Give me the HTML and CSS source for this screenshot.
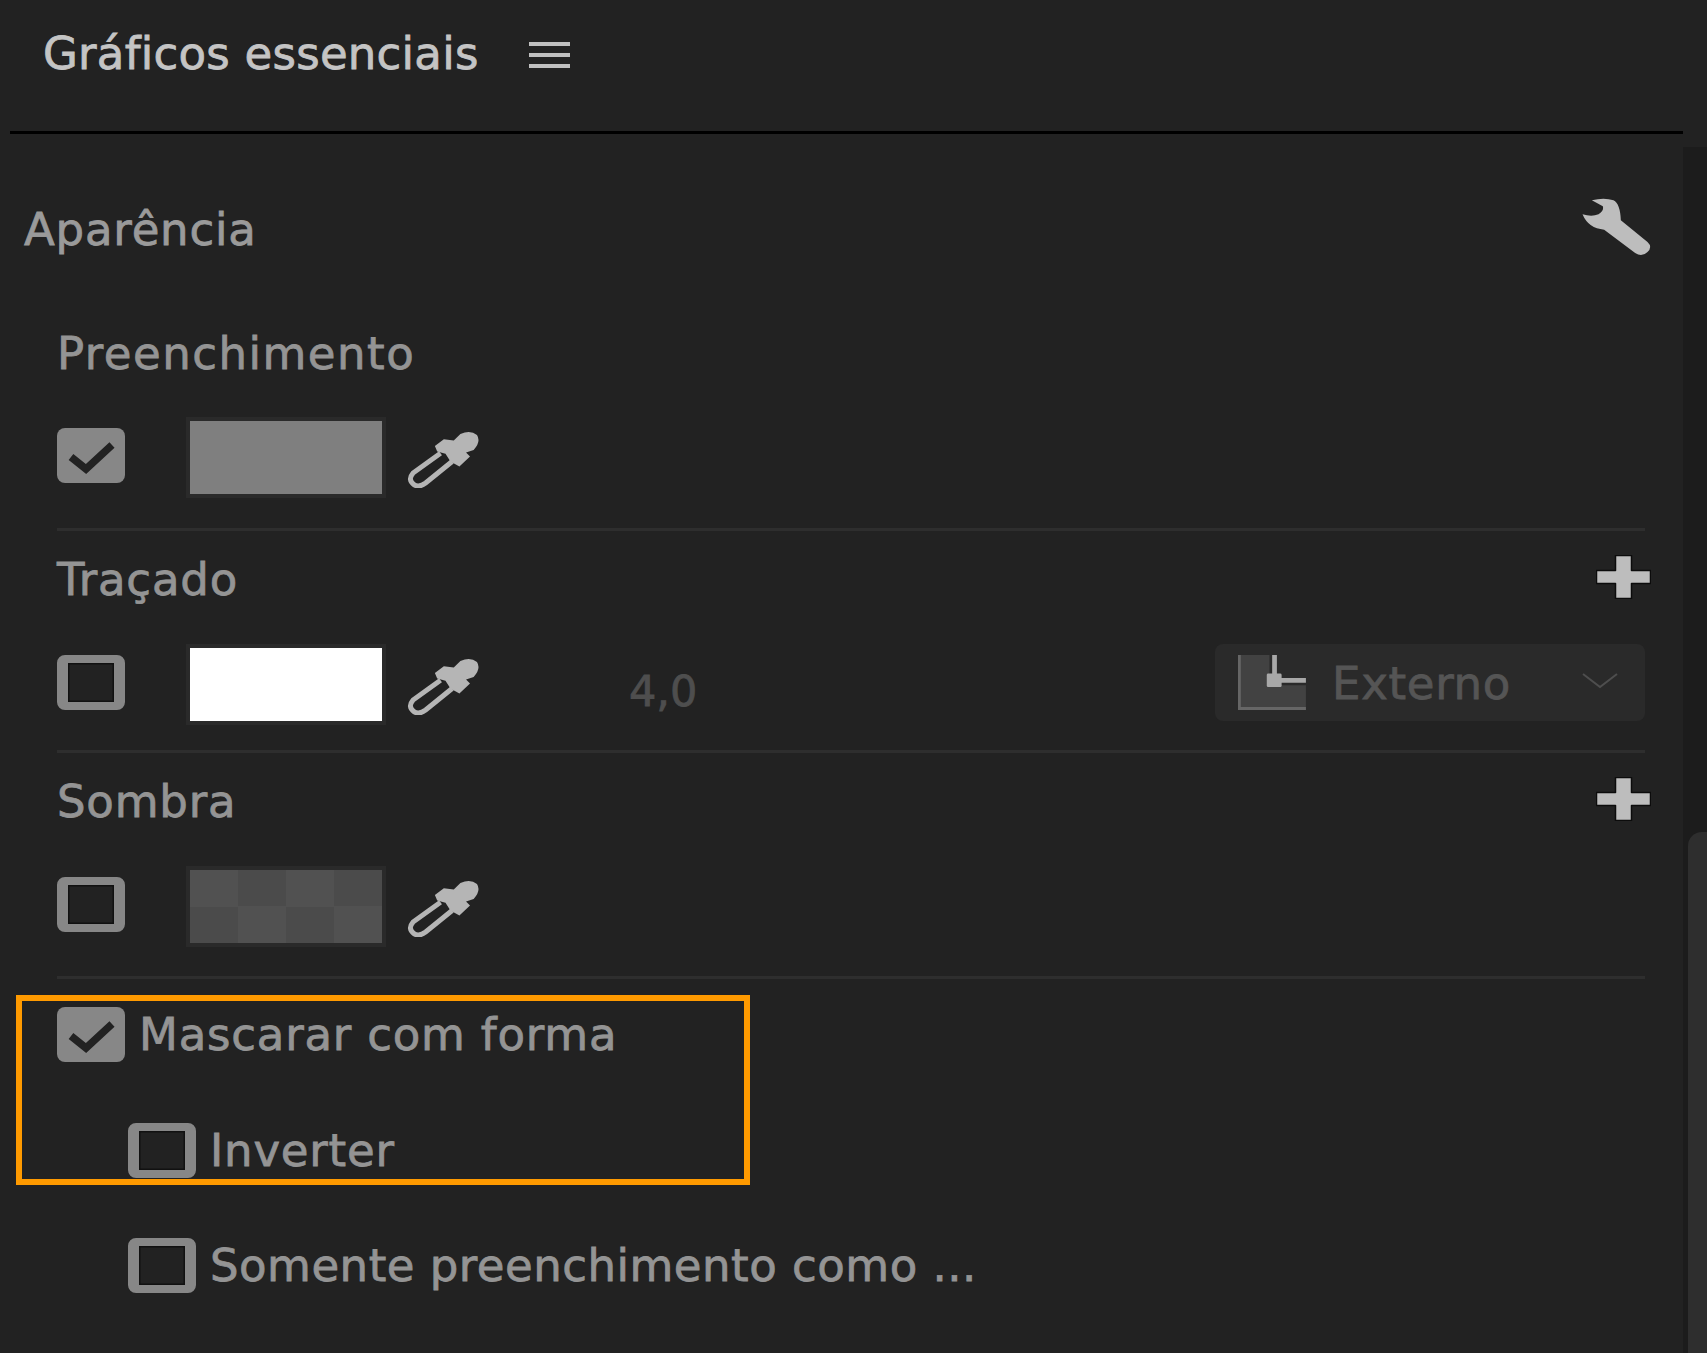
FILE: index.html
```html
<!DOCTYPE html>
<html lang="pt">
<head>
  <meta charset="UTF-8">
  <meta name="viewport" content="width=device-width, initial-scale=1.0">
  <title>Gráficos essenciais</title>
  <link rel="stylesheet" href="styles.css">
</head>
<body>
  <svg class="defs" width="0" height="0">
    <symbol id="eyedropper" viewBox="35 30 215 175">
      <path d="M118 78 L145 58 L175 62 L195 42 Q225 28 245 45 Q258 65 235 90 L212 98 L224 110 L192 140 L165 125 L150 102 L125 95 Z" fill="#b5b5b5"/>
      <path d="M135 100 L52 160 Q35 180 55 195 Q70 205 90 190 L170 125" fill="none" stroke="#b5b5b5" stroke-width="15"/>
    </symbol>
    <symbol id="plus" viewBox="0 0 55 44">
      <path d="M19.5 .5 H35.5 V15.5 H54.5 V28.5 H35.5 V43.5 H19.5 V28.5 H.5 V15.5 H19.5 Z" fill="#bdbdbd" stroke="#0c0c0c" stroke-width="1.5" stroke-linejoin="round"/>
    </symbol>
    <symbol id="check" viewBox="0 0 68 55">
      <path d="M14 29 L29 41 L55 17" fill="none" stroke="#222" stroke-width="7.5"/>
    </symbol>
  </svg>

  <header class="panel-head">
    <h1 class="panel-head__title">Gráficos essenciais</h1>
    <div class="panel-head__menu"><span></span><span></span><span></span></div>
  </header>

  <div class="panel-body">
    <main class="props">
      <div class="props__head">
        <h2 class="props__title">Aparência</h2>
        <svg class="wrench" viewBox="1190 80 218 180">
          <path d="M1225 90 Q1262 80 1290 90 Q1310 100 1312 150 L1392 215 Q1408 230 1392 245 Q1375 262 1355 248 L1262 178 Q1215 175 1197 132 Q1225 140 1245 132 Q1262 122 1258 108 Z" fill="#bdbdbd"/>
        </svg>
      </div>

      <section class="group group--fill">
        <div class="group__head"><span class="label">Preenchimento</span></div>
        <div class="color-row">
          <div class="chk chk--on"><svg><use href="#check"/></svg></div>
          <div class="swatch"><div class="swatch__fill swatch__fill--grey"></div></div>
          <svg class="dropper"><use href="#eyedropper"/></svg>
        </div>
      </section>

      <section class="group">
        <div class="group__head">
          <span class="label">Traçado</span>
          <svg class="add"><use href="#plus"/></svg>
        </div>
        <div class="color-row color-row--stroke">
          <div class="chk"></div>
          <div class="swatch"><div class="swatch__fill swatch__fill--white"></div></div>
          <svg class="dropper"><use href="#eyedropper"/></svg>
          <span class="stroke-val">4,0</span>
          <div class="select">
            <svg class="select__icon" viewBox="177 105 201 163">
              <path d="M177 105 H270 V195 H378 V268 H177 Z" fill="#424242"/>
              <path d="M180 105 V264 H378" fill="none" stroke="#666" stroke-width="10"/>
              <path d="M285 105 V180 H378" fill="none" stroke="#a8a8a8" stroke-width="14"/>
              <rect x="262" y="160" width="44" height="40" rx="4" fill="#a8a8a8"/>
            </svg>
            <span class="select__text">Externo</span>
            <svg class="select__arrow" viewBox="0 0 36 16"><path d="M1 1 L18 14 L35 1" fill="none" stroke="#4e4e4e" stroke-width="2"/></svg>
          </div>
        </div>
      </section>

      <section class="group">
        <div class="group__head">
          <span class="label">Sombra</span>
          <svg class="add"><use href="#plus"/></svg>
        </div>
        <div class="color-row">
          <div class="chk"></div>
          <div class="swatch"><div class="swatch__fill swatch__fill--checker"></div></div>
          <svg class="dropper"><use href="#eyedropper"/></svg>
        </div>
      </section>

      <div class="divider"></div>

      <div class="mask-box">
        <div class="opt">
          <div class="chk chk--on"><svg><use href="#check"/></svg></div>
          <span class="label">Mascarar com forma</span>
        </div>
        <div class="opt opt--invert">
          <div class="chk"></div>
          <span class="label">Inverter</span>
        </div>
      </div>

      <div class="opt opt--only">
        <div class="chk"></div>
        <span class="label">Somente preenchimento como ...</span>
      </div>
    </main>
    <aside class="scroll"><div class="scroll__thumb"></div></aside>
  </div>
</body>
</html>
```
FILE: styles.css
```css
* {
  box-sizing: border-box;
  font-family: 'DejaVu Sans', sans-serif;
}
html, body {
  margin: 0;
  height: 1353px;
  overflow: hidden;
  background: #222;
}
.defs {
  position: absolute;
}
h1, h2 {
  margin: 0;
  font-weight: 400;
}

.panel-head {
  height: 134px;
  margin: 0 24px 0 10px;
  padding: 31px 0 0 33px;
  display: flex;
  align-items: flex-start;
  gap: 50px;
  border-bottom: 3px solid #000;
}
.panel-head__title {
  font-size: 45px;
  line-height: 46px;
  letter-spacing: .25px;
  -webkit-text-stroke: .8px #c4c4c4;
  color: #c4c4c4;
}
.panel-head__menu {
  margin-top: 11px;
  width: 41px;
  display: flex;
  flex-direction: column;
  gap: 7px;
}
.panel-head__menu span {
  height: 4px;
  background: #c0c0c0;
}

.panel-body {
  display: flex;
}
.props {
  width: 1683px;
  padding-top: 64px;
}
.scroll {
  width: 24px;
  height: 1206px;
  margin-top: 13px;
  padding: 685px 0 0 5px;
  background: #1c1c1c;
}
.scroll__thumb {
  height: 100%;
  background: #2e2e2e;
  border-radius: 14px 0 0 0;
}

.props__head {
  height: 57px;
  padding: 0 32px 0 24px;
  display: flex;
  justify-content: space-between;
  align-items: center;
}
.props__title {
  margin-top: 6px;
  font-size: 45px;
  line-height: 57px;
  letter-spacing: .8px;
  -webkit-text-stroke: .8px #9a9a9a;
  color: #9a9a9a;
}
.wrench {
  width: 73px;
  height: 60px;
  margin-right: -2px;
}

.label {
  font-size: 45px;
  line-height: 44px;
  letter-spacing: .8px;
  -webkit-text-stroke: .8px #949494;
  color: #949494;
}

.group {
  margin: 0 38px 0 57px;
  padding-top: 24px;
  border-top: 3px solid #2e2e2e;
}
.group--fill {
  margin-top: 80px;
  padding-top: 0;
  border-top: 0;
}
.group__head {
  height: 44px;
  display: flex;
  justify-content: space-between;
  align-items: center;
}
.group__head .label {
  margin-top: 6px;
}
.group--fill .group__head .label {
  margin-top: -6px;
  letter-spacing: 1.5px;
}
.add {
  width: 55px;
  height: 44px;
  margin-right: -6px;
}

.color-row {
  height: 81px;
  margin: 45px 0 29px;
  display: flex;
  align-items: flex-start;
}
.group--fill .color-row {
  margin: 38px 0 30px;
}
.color-row--stroke {
  height: 79px;
  margin-bottom: 27px;
}
.chk {
  flex: none;
  width: 68px;
  height: 55px;
  margin-top: 11px;
  border: solid #878787;
  border-width: 8px 11px;
  border-radius: 8px;
  box-shadow: inset 0 0 0 1.5px #111;
}
.chk--on {
  border: 0;
  background: #878787;
  box-shadow: none;
}
.chk svg {
  display: block;
  width: 68px;
  height: 55px;
}

.swatch {
  flex: none;
  width: 200px;
  height: 81px;
  margin-left: 61px;
  padding: 4px;
  background: #2a2a2a;
}
.swatch__fill {
  height: 100%;
}
.swatch__fill--grey {
  background: #7f7f7f;
}
.swatch__fill--white {
  background: #fff;
}
.swatch__fill--checker {
  background: conic-gradient(#4b4b4b 25%, #515151 0 50%, #4b4b4b 0 75%, #515151 0) 0 0 / 96px 73px;
}
.dropper {
  flex: none;
  width: 72px;
  height: 58px;
  margin: 13px 0 0 21px;
}

.stroke-val {
  margin: 25px 0 0 150px;
  font-size: 43px;
  line-height: 44px;
  -webkit-text-stroke: .8px #4e4e4e;
  color: #4e4e4e;
}
.select {
  flex: none;
  width: 430px;
  height: 77px;
  margin-left: auto;
  padding: 0 27px 0 23px;
  display: flex;
  align-items: center;
  background: #2a2a2a;
  border-radius: 8px;
}
.select__icon {
  flex: none;
  width: 68px;
  height: 55px;
}
.select__text {
  margin: 2px 0 0 26px;
  font-size: 45px;
  letter-spacing: .7px;
  -webkit-text-stroke: .8px #555;
  color: #555;
}
.select__arrow {
  width: 36px;
  height: 16px;
  margin-left: auto;
  margin-top: -4px;
}

.divider {
  height: 3px;
  margin: 0 38px 0 57px;
  background: #2e2e2e;
}

.mask-box {
  width: 734px;
  height: 190px;
  margin: 16px 0 0 16px;
  padding: 6px 0 0 35px;
  border: 6px solid #ff9a00;
}
.opt {
  display: flex;
  align-items: flex-start;
  gap: 14px;
}
.opt .chk {
  margin-top: 0;
}
.opt .label {
  line-height: 55px;
}
.opt--invert {
  margin: 61px 0 0 71px;
}
.opt--only {
  margin: 53px 0 0 128px;
}
.opt--only .label {
  letter-spacing: .5px;
}
```
